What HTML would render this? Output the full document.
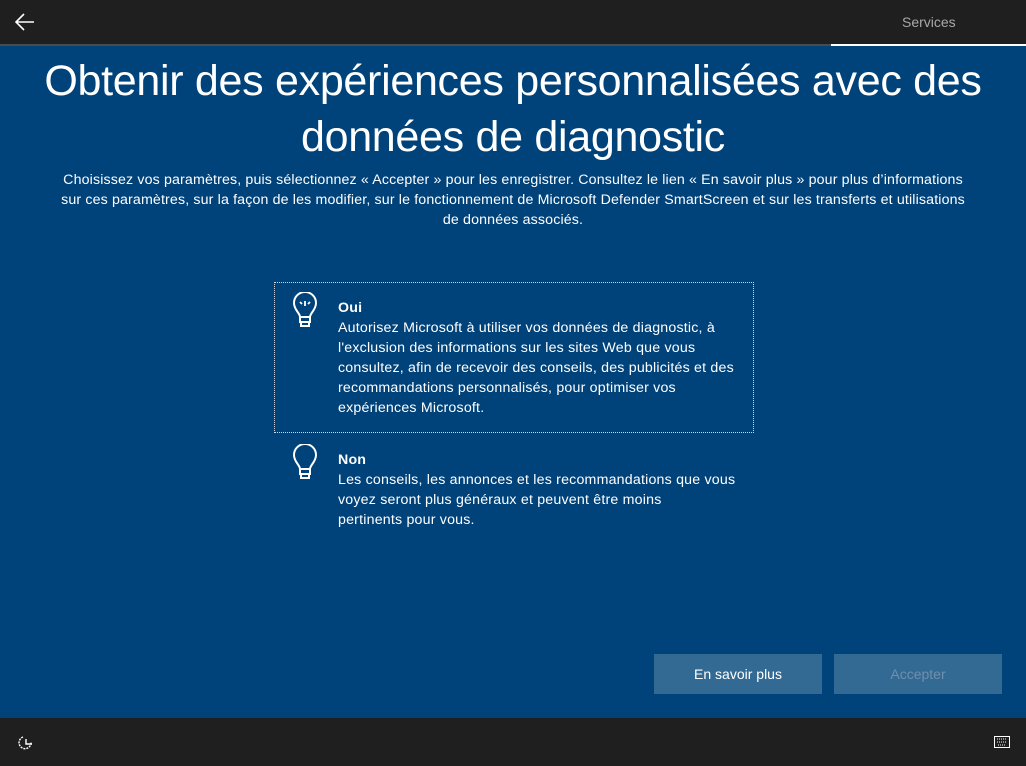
<!DOCTYPE html>
<html><head><meta charset="utf-8"><style>
html,body{margin:0;padding:0;}
body{width:1026px;height:766px;position:relative;overflow:hidden;background:#00427a;font-family:"Liberation Sans",sans-serif;color:#fff;}
.top{position:absolute;left:0;top:0;width:1026px;height:44px;background:#1f1f1f;}
.line1{position:absolute;left:0;top:44px;width:831px;height:2px;background:#4a4a4a;}
.line2{position:absolute;left:831px;top:44px;width:195px;height:2px;background:#fff;}
.svc{position:absolute;left:902px;top:14px;font-size:14px;color:#a8a8a8;}
.bot{position:absolute;left:0;top:718px;width:1026px;height:48px;background:#1f1f1f;}
h1{position:absolute;left:0;top:53px;width:1026px;margin:0;text-align:center;font-weight:normal;font-size:43px;line-height:56px;letter-spacing:-0.3px;}
.sub{position:absolute;left:0;top:170px;width:1026px;text-align:center;font-size:14.2px;line-height:20px;white-space:nowrap;letter-spacing:0.15px;}
.box{position:absolute;left:274px;top:282px;width:478px;height:149px;border:1px dotted #cfd8e2;}
.opt{position:absolute;left:338px;width:420px;font-size:14.2px;line-height:20px;white-space:nowrap;letter-spacing:0.2px;}
.opt b{display:block;}
.btn{position:absolute;top:654px;width:168px;height:40px;background:#336a94;font-size:14px;text-align:center;line-height:40px;}
</style></head><body>
<div class="top"></div><div class="line1"></div><div class="line2"></div>
<svg style="position:absolute;left:14px;top:12px" width="22" height="20" viewBox="0 0 22 20"><path d="M20 10H3M10 2L2 10L10 18" stroke="#fff" stroke-width="1.6" fill="none"/></svg>
<div class="svc">Services</div>
<h1>Obtenir des expériences personnalisées avec des<br>données de diagnostic</h1>
<div class="sub">Choisissez vos paramètres, puis sélectionnez « Accepter » pour les enregistrer. Consultez le lien « En savoir plus » pour plus d’informations<br>sur ces paramètres, sur la façon de les modifier, sur le fonctionnement de Microsoft Defender SmartScreen et sur les transferts et utilisations<br>de données associés.</div>
<div class="box"></div>
<svg style="position:absolute;left:292px;top:292px" width="26" height="36" viewBox="0 0 26 36"><path d="M8 30V25C8 21 2 18 2 11A11 11 0 0 1 24 11C24 18 18 21 18 25V30ZM8 25H18M9 30V34H17V30" stroke="#fff" stroke-width="2" fill="none"/><path d="M13 9V14M8 10L10 12M18 10L16 12" stroke="#fff" stroke-width="1.8"/></svg>
<div class="opt" style="top:298px"><b>Oui</b>Autorisez Microsoft à utiliser vos données de diagnostic, à<br>l'exclusion des informations sur les sites Web que vous<br>consultez, afin de recevoir des conseils, des publicités et des<br>recommandations personnalisés, pour optimiser vos<br>expériences Microsoft.</div>
<svg style="position:absolute;left:292px;top:444px" width="26" height="36" viewBox="0 0 26 36"><path d="M8 30V25C8 21 2 18 2 11A11 11 0 0 1 24 11C24 18 18 21 18 25V30ZM8 25H18M9 30V34H17V30" stroke="#fff" stroke-width="2" fill="none"/></svg>
<div class="opt" style="top:450px"><b>Non</b>Les conseils, les annonces et les recommandations que vous<br>voyez seront plus généraux et peuvent être moins<br>pertinents pour vous.</div>
<div class="btn" style="left:654px">En savoir plus</div>
<div class="btn" style="left:834px;color:#6f8fac">Accepter</div>
<div class="bot"></div>
<svg style="position:absolute;left:17px;top:734px" width="18" height="18" viewBox="0 0 18 18"><path d="M6 3A6 6 0 1 0 14 8" stroke="#fff" stroke-width="1.4" fill="none" stroke-dasharray="2 1"/><path d="M9 5V10H15" stroke="#fff" stroke-width="1.4" fill="none"/></svg>
<svg style="position:absolute;left:994px;top:736px" width="16" height="12" viewBox="0 0 16 12"><rect x="0.5" y="0.5" width="15" height="11" fill="none" stroke="#fff"/><path d="M3 3h10M3 6h10M4 9h8" stroke="#fff" stroke-dasharray="1 1"/></svg>
</body></html>
